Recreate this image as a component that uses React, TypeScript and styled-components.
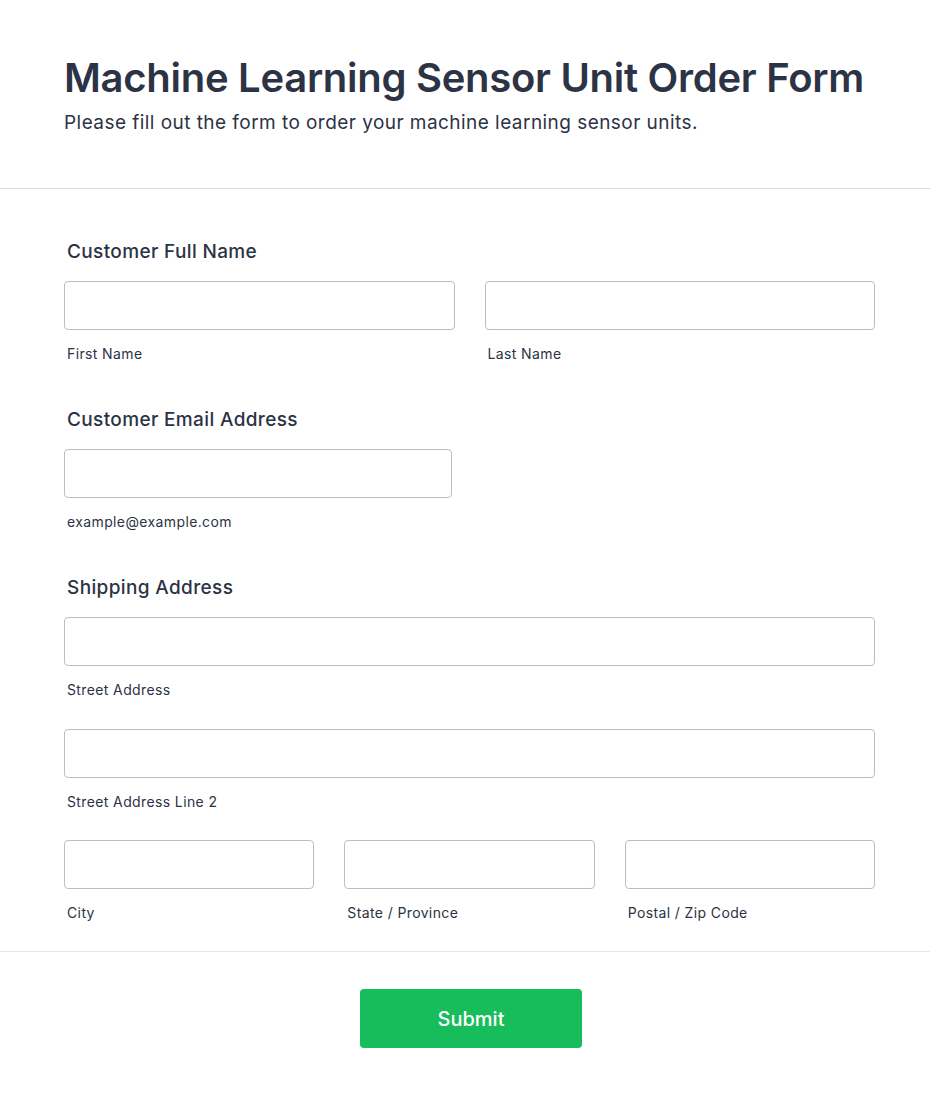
import React from "react";
import styled, { createGlobalStyle } from "styled-components";

const GlobalStyle = createGlobalStyle`
  html, body {
    margin: 0;
    padding: 0;
    background: #ffffff;
  }
  body {
    font-family: Inter, "Noto Sans", "Liberation Sans", sans-serif;
    color: #2c3345;
    -webkit-font-smoothing: antialiased;
  }
  * { box-sizing: border-box; }
`;

const Page = styled.div`
  width: 930px;
  min-height: 1098px;
  background: #ffffff;
`;

const Header = styled.header`
  padding: 54px 55px 52px 64px;
  border-bottom: 1px solid #d8dae8;
`;

const Title = styled.h1`
  margin: 0;
  font-size: 40px;
  line-height: 48px;
  font-weight: 600;
  color: #2c3345;
  letter-spacing: -0.28px;
`;

const Subtitle = styled.p`
  margin: 7px 0 0;
  font-size: 19px;
  line-height: 27px;
  font-weight: 400;
  letter-spacing: 0.45px;
  color: #2c3345;
`;

const Body = styled.form`
  padding: 50px 55px 28px 64px;
  border-bottom: 1px solid #e6e6ef;
  display: flex;
  flex-direction: column;
  gap: 43px;
`;

const Section = styled.section`
  display: flex;
  flex-direction: column;
`;

const SectionLabel = styled.label`
  display: block;
  padding-left: 3px;
  font-size: 19px;
  line-height: 26px;
  font-weight: 500;
  letter-spacing: 0.36px;
  color: #2c3345;
  margin-bottom: 16px;
`;

const Rows = styled.div`
  display: flex;
  flex-direction: column;
  gap: 28.5px;
`;

const Grid = styled.div<{ $cols: number; $width?: string }>`
  display: grid;
  grid-template-columns: repeat(${(p) => p.$cols}, 1fr);
  column-gap: 30px;
  width: ${(p) => p.$width ?? "100%"};
`;

const Field = styled.div`
  display: flex;
  flex-direction: column;
`;

const Input = styled.input`
  display: block;
  width: 100%;
  height: 49px;
  border: 1px solid #b8bdc9;
  border-radius: 4px;
  background: #ffffff;
  font-family: inherit;
  font-size: 16px;
  padding: 0 12px;
  outline: none;
`;

const SubLabel = styled.span`
  display: block;
  margin-top: 13px;
  padding-left: 3px;
  font-size: 14px;
  line-height: 21px;
  letter-spacing: 0.38px;
  color: #2c3345;
`;

const Footer = styled.div`
  display: flex;
  justify-content: center;
  padding: 37px 0 50px 12px;
`;

const SubmitButton = styled.button`
  width: 222px;
  height: 59px;
  border: none;
  border-radius: 4px;
  background: #18bd5b;
  color: #ffffff;
  font-family: inherit;
  font-size: 20px;
  font-weight: 500;
  cursor: pointer;
`;

type FieldDef = { sub: string };

const InputField = ({ sub }: FieldDef) => (
  <Field>
    <Input type="text" aria-label={sub} />
    <SubLabel>{sub}</SubLabel>
  </Field>
);

export default function App() {
  return (
    <Page>
      <GlobalStyle />
      <Header>
        <Title>Machine Learning Sensor Unit Order Form</Title>
        <Subtitle>Please fill out the form to order your machine learning sensor units.</Subtitle>
      </Header>
      <Body onSubmit={(e) => e.preventDefault()}>
        <Section>
          <SectionLabel>Customer Full Name</SectionLabel>
          <Grid $cols={2}>
            <InputField sub="First Name" />
            <InputField sub="Last Name" />
          </Grid>
        </Section>
        <Section>
          <SectionLabel>Customer Email Address</SectionLabel>
          <Grid $cols={1} $width="388px">
            <InputField sub="example@example.com" />
          </Grid>
        </Section>
        <Section>
          <SectionLabel>Shipping Address</SectionLabel>
          <Rows>
            <Grid $cols={1}>
              <InputField sub="Street Address" />
            </Grid>
            <Grid $cols={1}>
              <InputField sub="Street Address Line 2" />
            </Grid>
            <Grid $cols={3}>
              <InputField sub="City" />
              <InputField sub="State / Province" />
              <InputField sub="Postal / Zip Code" />
            </Grid>
          </Rows>
        </Section>
      </Body>
      <Footer>
        <SubmitButton type="submit">Submit</SubmitButton>
      </Footer>
    </Page>
  );
}
